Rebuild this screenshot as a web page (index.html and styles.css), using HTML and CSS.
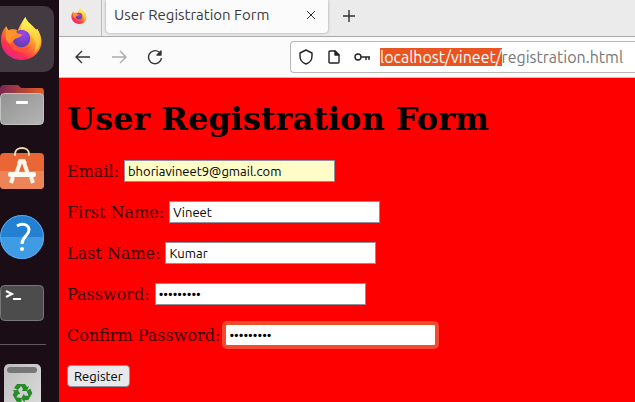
FILE: index.html
```html
<!DOCTYPE html>
<html lang="en">
<head>
<meta charset="utf-8">
<title>User Registration Form</title>
<link rel="stylesheet" href="styles.css">
</head>
<body>
<svg class="defs" aria-hidden="true">
  <defs>
    <linearGradient id="flame" x1="0.8" y1="0.1" x2="0.25" y2="0.95">
      <stop offset="0" stop-color="#fff04f"/><stop offset="0.3" stop-color="#ffb829"/>
      <stop offset="0.58" stop-color="#ff6b35"/><stop offset="0.8" stop-color="#ff3150"/><stop offset="1" stop-color="#e52486"/>
    </linearGradient>
    <linearGradient id="head" x1="0" y1="0" x2="1" y2="1">
      <stop offset="0" stop-color="#ffa52c"/><stop offset="1" stop-color="#ff7a2d"/>
    </linearGradient>
    <radialGradient id="globe" cx="0.6" cy="0.25" r="0.8">
      <stop offset="0" stop-color="#a044f0"/><stop offset="0.6" stop-color="#7140c8"/><stop offset="1" stop-color="#5a3f9c"/>
    </radialGradient>
    <linearGradient id="tail" x1="0" y1="0" x2="0" y2="1">
      <stop offset="0" stop-color="#fff75a"/><stop offset="1" stop-color="#ffb52b"/>
    </linearGradient>
    <linearGradient id="folder" x1="0" y1="0" x2="1" y2="0">
      <stop offset="0" stop-color="#7b2852"/><stop offset="1" stop-color="#e65c20"/>
    </linearGradient>
    <linearGradient id="front" x1="0" y1="0" x2="1" y2="1">
      <stop offset="0" stop-color="#929292"/><stop offset="1" stop-color="#b5b5b5"/>
    </linearGradient>
    <linearGradient id="bin" x1="0" y1="0" x2="1" y2="1">
      <stop offset="0" stop-color="#bdbdbd"/><stop offset="1" stop-color="#dedede"/>
    </linearGradient>
    <symbol id="firefox" viewBox="0 0 44 44">
      <path fill="url(#flame)" d="M6 10 C6 12 7 13 8 14 C11 12 15 12 18 14 C20 10 22 5 26 0 C27 5 33 8 37 13 L38 12 C42 18 44 25 41 32 C38 39 31 44 22 44 C10 44 1 35 1 23 C1 18 3 13 6 10Z"/>
      <path fill="url(#tail)" d="M21 13 C22 7 24 3 26 0 C27 5 33 8 37 14 L38 12 C43 21 42 31 35 37 C38 29 36 21 29 16Z"/>
      <circle cx="22" cy="22" r="9" fill="url(#globe)"/>
      <path fill="url(#head)" d="M6 9 C7 11 8 12 9 14 C13 13 16 14 18 17 L23 18 C22 20 20 21 16 22 C13 24 12 26 13 29 C8 28 5 22 6 17Z"/>
      <path fill="#ff5238" d="M13 25 C16 32 24 35 31 30 C27 38 14 38 10 28Z"/>
    </symbol>
    <path id="arrow" d="M17 31 H25 L27 34 L29 33 L27 38 H22 L23 36 L21 33 L18 37 L14 35Z"/>
  </defs>
</svg>
<div class="desktop">
  <nav class="dock" aria-label="Dock">
    <button class="app active" aria-label="Firefox">
      <svg viewBox="0 0 54 66"><use href="#firefox" x="0" y="11" width="43" height="43"/></svg>
    </button>
    <button class="app" aria-label="Files">
      <svg viewBox="0 0 54 66">
        <path fill="url(#folder)" d="M0 16 Q1 13 4 13 H17 Q19 13 20 15 L21 16 H41 Q44 16 44 20 V30 H0Z"/>
        <rect x="0.5" y="21.500" width="43" height="31" rx="4" fill="url(#front)" stroke="#c2c2c2"/>
        <rect x="16" y="29" width="12" height="3" rx="1" fill="#fff"/>
      </svg>
    </button>
    <button class="app" aria-label="Software">
      <svg viewBox="0 0 54 66">
        <rect x="0" y="15" width="44" height="36" rx="4" fill="#ea6634"/>
        <path fill="#ed8458" d="M0 33 H44 V47 Q44 51 40 51 H4 Q0 51 0 47Z"/>
        <path fill="none" stroke="#f0d9aa" stroke-width="2" d="M15 18 V16 C15 8 29 8 29 16 V18"/>
        <path fill="none" stroke="#fff3ea" stroke-width="4" d="M21 22 L16 36 M23 22 L28 36 M13 39 L11 45 M31 39 L33 45"/>
        <path fill="#fff3ea" d="M19 21 H25 L27 25 H17Z"/>
        <rect x="8" y="34" width="28" height="5" rx="2" fill="#fffaf4"/>
      </svg>
    </button>
    <button class="app" aria-label="Help">
      <svg viewBox="0 0 54 66">
        <circle cx="22" cy="33" r="22" fill="#2380d3"/>
        <path fill="#409be5" d="M0 33 H44 A22 22 0 0 1 0 33Z"/>
        <circle cx="22" cy="33" r="21.500" fill="none" stroke="#57a9e8"/>
        <path fill="none" stroke="#fff" stroke-width="3" d="M17 22 C22 19 29 20 29 26 C29 32 22 32 22 40"/>
        <circle cx="22" cy="45" r="2" fill="#fff"/>
      </svg>
    </button>
    <button class="app" aria-label="Terminal">
      <svg viewBox="0 0 54 66">
        <rect x="0.5" y="15.500" width="43" height="35" rx="4" fill="#4c4c4c" stroke="#777"/>
        <path fill="none" stroke="#fff" stroke-width="2" d="M6 21 L12 24 L6 27 M13 29 H21"/>
      </svg>
    </button>
    <hr class="divider">
    <button class="app" aria-label="Trash">
      <svg viewBox="0 0 54 66">
        <rect x="4" y="11" width="37" height="50" rx="5" fill="url(#bin)"/>
        <rect x="7" y="14" width="30" height="6" rx="3" fill="#777"/>
        <g fill="#278b29">
          <use href="#arrow"/>
          <use href="#arrow" transform="rotate(120 22 40)"/>
          <use href="#arrow" transform="rotate(240 22 40)"/>
        </g>
      </svg>
    </button>
  </nav>
  <div class="browser">
    <header class="tabs">
      <button class="pinned" aria-label="Pinned tab"><svg width="16" height="16"><use href="#firefox"/></svg></button>
      <div class="tab">
        <span class="tab-title">User Registration Form</span>
        <button class="icon-button" aria-label="Close tab"><svg width="8" height="8" viewBox="0 0 8 8"><path class="thin" d="M0 0 L8 8 M8 0 L0 8"/></svg></button>
      </div>
      <button class="icon-button new-tab" aria-label="New tab"><svg width="12" height="12" viewBox="0 0 12 12"><path d="M6 0 V12 M0 6 H12"/></svg></button>
    </header>
    <div class="toolbar">
      <div class="navigation">
        <button class="icon-button" aria-label="Back"><svg width="16" height="16" viewBox="0 0 16 16"><path d="M15 8 H2 M7 2 L1 8 L7 14"/></svg></button>
        <button class="icon-button" aria-label="Forward" disabled><svg width="16" height="16" viewBox="0 0 16 16"><path d="M1 8 H14 M9 2 L15 8 L9 14"/></svg></button>
        <button class="icon-button" aria-label="Reload"><svg width="16" height="16" viewBox="0 0 16 16"><path d="M12 3 A6.500 6.500 0 1 0 14.500 9"/><path class="solid" d="M14 2 V6 H10Z"/></svg></button>
      </div>
      <div class="address">
        <svg width="16" height="16" viewBox="0 0 16 16"><path d="M8 1 L14 4 V7 C14 11 11 14 8 15 C5 14 2 11 2 7 V4Z"/></svg>
        <svg width="16" height="16" viewBox="0 0 16 16"><path d="M4 2 H9 L13 6 V13 Q13 14 12 14 H4 Q3 14 3 13 V3 Q3 2 4 2Z"/><path class="solid" d="M9 2 V6 H13Z"/></svg>
        <svg width="16" height="16" viewBox="0 0 16 16"><circle cx="4" cy="8" r="3"/><path d="M7 8 H16 M12 8 V11 M15 8 V11"/></svg>
        <input class="url" id="url" type="text" aria-label="Address" value="localhost/vineet/registration.html" spellcheck="false">
      </div>
    </div>
    <main class="page">
      <h1>User Registration Form</h1>
      <form class="form">
        <div class="field"><label for="email">Email:</label><input class="filled" id="email" type="email" value="bhoriavineet9@gmail.com"></div>
        <div class="field"><label for="first">First Name:</label><input id="first" type="text" value="Vineet"></div>
        <div class="field"><label for="last">Last Name:</label><input id="last" type="text" value="Kumar"></div>
        <div class="field"><label for="password">Password:</label><input id="password" type="password" value="password1"></div>
        <div class="field"><label for="confirm">Confirm Password:</label><input class="highlighted" id="confirm" type="password" value="password1"></div>
        <button class="register" type="button">Register</button>
      </form>
    </main>
  </div>
</div>
<script src="script.js"></script>
</body>
</html>
```
FILE: styles.css
```css
* { box-sizing: border-box; }
body { margin: 0; }
button { margin: 0; padding: 0; border: 0; background: none; }
.defs { position: absolute; width: 0; height: 0; }
.desktop { display: flex; height: 100vh; overflow: hidden; background: #f00; }
.dock { flex: none; display: flex; flex-direction: column; width: 59px; padding-top: 6px; overflow: hidden; background: #1b0d15; }
.app { flex: none; width: 54px; height: 66px; }
.app svg { display: block; width: 54px; height: 66px; }
.active { background: #443a41; border-radius: 0 10px 10px 0; }
.divider { flex: none; width: 46px; height: 1px; margin: 8px 0; border: 0; background: #62565d; }
.browser { flex: 1; min-width: 0; display: flex; flex-direction: column; font-family: "Noto Sans", sans-serif; }
.tabs { flex: none; display: flex; align-items: flex-start; height: 37px; border-bottom: 1px solid #aaa; background: #ebebeb; overflow: hidden; }
.pinned { display: flex; align-items: center; justify-content: center; width: 43px; height: 36px; padding: 0 3px 5px 0; border-right: 1px solid #bbb; }
.tab { display: flex; align-items: center; justify-content: space-between; width: 222px; height: 33px; margin-left: 4px; padding: 0 13px 3px 8px; border-radius: 0 0 4px 4px; background: #fbfbfb; box-shadow: 0 0 3px #999; }
.tab-title { font: 15px/20px Ubuntu, "Noto Sans", sans-serif; color: #3b3b3b; white-space: nowrap; }
.icon-button { display: flex; color: #333; }
.icon-button:disabled { color: #aaa; }
.new-tab { margin: 10px 0 0 15px; }
.icon-button svg, .address svg { flex: none; fill: none; stroke: currentColor; stroke-width: 1.4; stroke-linejoin: round; }
.icon-button .thin { stroke-width: 1; }
.icon-button .solid, .address .solid { fill: currentColor; }
.toolbar { flex: none; display: flex; align-items: center; justify-content: space-between; height: 41px; padding-left: 16px; border-bottom: 1px solid #d8b8b8; background: #fbfbfb; }
.navigation { display: flex; gap: 20px; }
.address { display: flex; align-items: center; gap: 12px; width: 345px; height: 32px; padding-left: 7px; border: 1px solid #b8b8b8; border-right: 0; border-radius: 4px 0 0 4px; background: #fff; color: #222; }
.url { flex: 1; min-width: 0; margin-left: -2px; padding: 0; border: 0; outline: 0; background: none; font: 16px/18px Ubuntu, "Noto Sans", sans-serif; color: #777; }
.url::selection { background: #e95420; color: #fff; }
.page { flex: 1; padding: 0 8px; background: #f00; font: 16px/19px "DejaVu Serif", serif; color: #400000; }
h1 { margin: 22px 0; font-size: 32px; line-height: 38px; color: #000; }
.form { display: flex; flex-direction: column; align-items: flex-start; gap: 19px; }
.field { display: flex; align-items: center; gap: 5px; }
.field input { width: 211px; height: 22px; padding: 0 3px; border: 1px solid #8f8f9d; background: #fff; font: 13px/18px Ubuntu, "Noto Sans", sans-serif; color: #000; }
.field .filled { background: #fffcc8; }
.field .highlighted { border-color: #e95420; border-radius: 2px; box-shadow: 0 0 0 3px #f5482f; }
.register { height: 22px; padding: 0 6px; border: 1px solid #8f8f9d; border-radius: 4px; background: #e9e9ed; font: 13px/18px Ubuntu, "Noto Sans", sans-serif; color: #000; }
```
FILE: script.js
```js
const address = document.getElementById("url");
address.focus();
address.setSelectionRange(0, "localhost/vineet/".length);
```
